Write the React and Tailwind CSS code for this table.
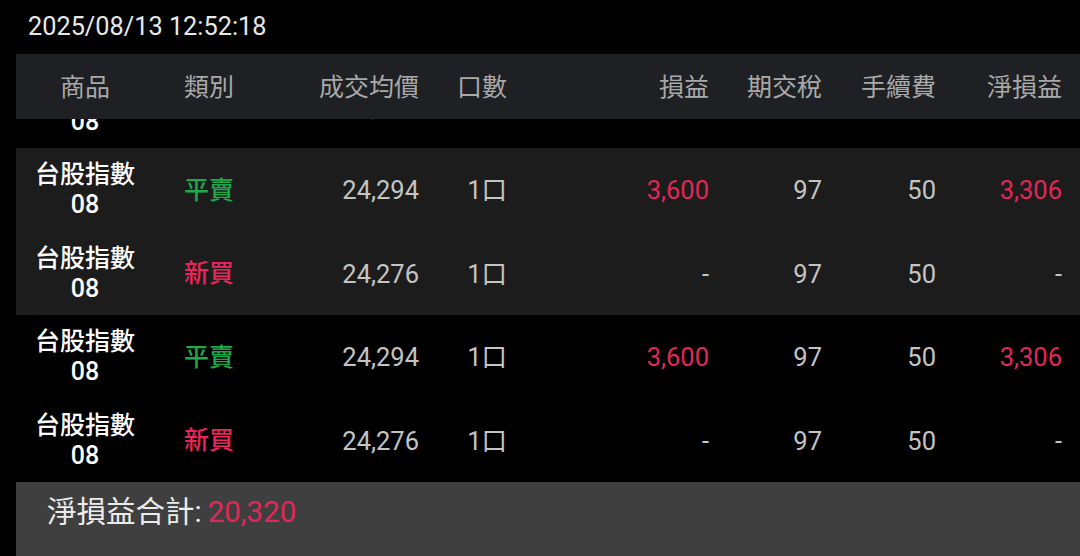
import React from 'react'

const cols =
  'grid grid-cols-[138px_110px_155px_88px_202px_113px_114px_1fr] items-center'

const rows = [
  { side: '新買', sideColor: 'text-[#e8265e]', price: '24,276', pnl: '-', net: '-' },
  { side: '平賣', sideColor: 'text-[#1fa84a]', price: '24,294', pnl: '3,600', net: '3,306' },
  { side: '新買', sideColor: 'text-[#e8265e]', price: '24,276', pnl: '-', net: '-' },
  { side: '平賣', sideColor: 'text-[#1fa84a]', price: '24,294', pnl: '3,600', net: '3,306' },
  { side: '新買', sideColor: 'text-[#e8265e]', price: '24,276', pnl: '-', net: '-' },
]

const App = () => {
  return (
    <div
      className="w-[1080px] h-[556px] bg-black overflow-hidden flex flex-col"
      style={{ fontFamily: 'Roboto, "Noto Sans CJK TC", sans-serif' }}
    >
      {/* TIMESTAMP */}
      <div className="h-[54px] flex items-center pl-[28px] text-[25.3px] text-[#e8e8e8]">
        2025/08/13 12:52:18
      </div>

      {/* HEADER */}
      <div className={`${cols} ml-4 h-[65px] pt-[2px] bg-[#1f2023] text-[25px] text-[#a9a9a9]`}>
        <div className="text-center">商品</div>
        <div className="text-center">類別</div>
        <div className="text-right">成交均價</div>
        <div className="text-right">口數</div>
        <div className="text-right">損益</div>
        <div className="text-right">期交稅</div>
        <div className="text-right">手續費</div>
        <div className="text-right pr-[18px]">淨損益</div>
      </div>

      {/* ROWS */}
      <div className="h-[363px] overflow-hidden ml-4">
        <div className="-mt-[54.5px]">
          {rows.map((r, i) => {
            // stripe by trade pair: partial row is second of a black pair
            const gray = Math.floor((i + 1) / 2) % 2 === 1
            return (
              <div
                key={i}
                className={`${cols} h-[83.5px] pt-[1px] text-[25.5px] ${gray ? 'bg-[#1c1c1c]' : 'bg-black'}`}
              >
                <div className="text-center leading-[30px] text-[25px] font-medium text-white">
                  <div>台股指數</div>
                  <div>08</div>
                </div>
                <div className={`text-center text-[25px] font-medium ${r.sideColor}`}>{r.side}</div>
                <div className="text-right text-[#c4c4c4]">{r.price}</div>
                <div className="text-right text-[#c4c4c4]">1口</div>
                <div className={`text-right ${r.pnl === '-' ? 'text-[#c4c4c4]' : 'text-[#e0285a]'}`}>
                  {r.pnl}
                </div>
                <div className="text-right text-[#c4c4c4]">97</div>
                <div className="text-right text-[#c4c4c4]">50</div>
                <div
                  className={`text-right pr-[18px] ${r.net === '-' ? 'text-[#c4c4c4]' : 'text-[#e0285a]'}`}
                >
                  {r.net}
                </div>
              </div>
            )
          })}
        </div>
      </div>

      {/* FOOTER */}
      <div className="flex-1 ml-4 bg-[#3f3f3f] pl-[31px] pt-[11px] text-[29.5px] leading-[38px] text-[#ececec]">
        淨損益合計:<span className="ml-[6px] text-[#e0285a]">20,320</span>
      </div>
    </div>
  )
}

export default App
